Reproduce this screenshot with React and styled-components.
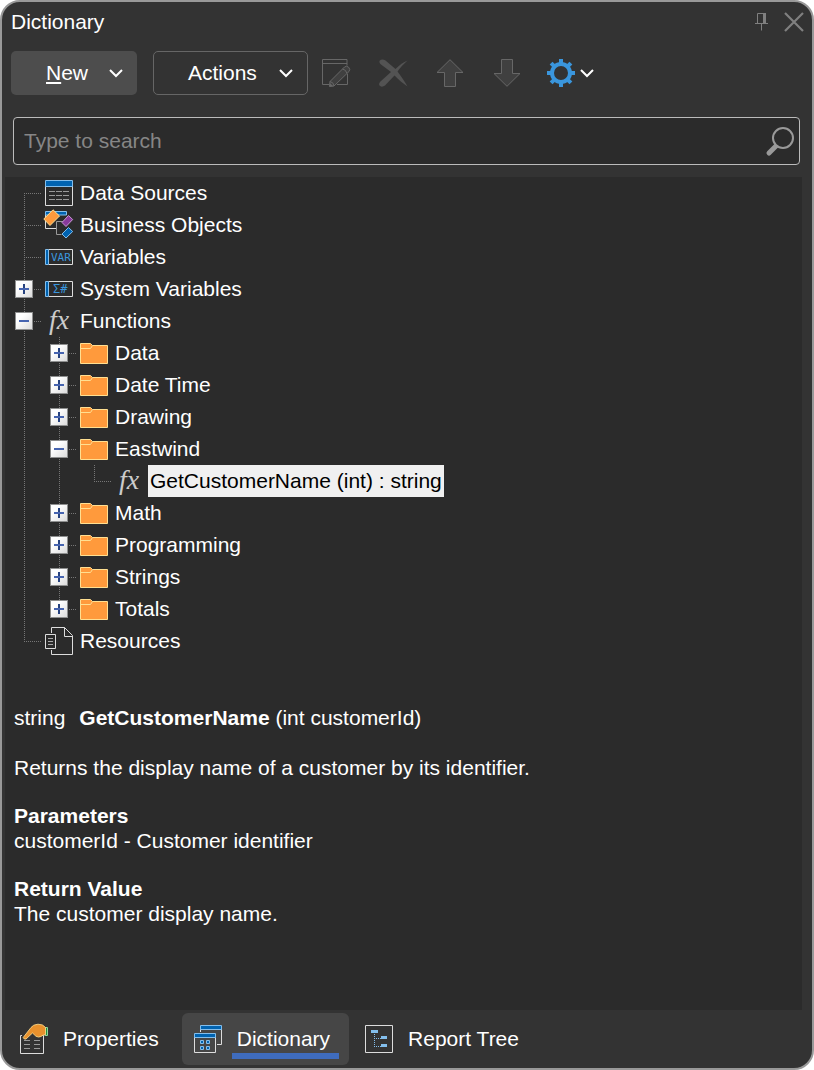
import React, { useState } from 'react';
import styled, { createGlobalStyle, css } from 'styled-components';

const GlobalStyle = createGlobalStyle`
  *, *::before, *::after {
    box-sizing: border-box;
  }

  body {
    margin: 0;
    background: #fff;
  }

  body, button, input {
    font-family: "Liberation Sans", Arial, sans-serif;
    font-size: 21px;
    color: #fff;
  }

  button {
    margin: 0;
    padding: 0;
    border: 0;
    background: none;
  }

  svg {
    display: block;
    flex: none;
    overflow: visible;
  }
`;

const Window = styled.div`
  display: flex;
  flex-direction: column;
  min-height: 100vh;
  border: 2px solid #999;
  border-radius: 20px;
  background: #333;
`;

const TitleBar = styled.header`
  display: flex;
  align-items: center;
  gap: 16px;
  height: 40px;
  padding: 0 8px 0 9px;
`;

const Title = styled.h1`
  flex: 1;
  margin: 0;
  font-size: 21px;
  font-weight: 400;
`;

const Toolbar = styled.div`
  display: flex;
  align-items: center;
  height: 62px;
  padding: 0 9px;
`;

const MenuButton = styled.button`
  display: flex;
  align-items: center;
  justify-content: space-between;
  width: ${({ $wide }) => ($wide ? '155px' : '126px')};
  height: 44px;
  margin-right: ${({ $wide }) => ($wide ? '0' : '16px')};
  padding: 0 14px 0 ${({ $wide }) => ($wide ? '34px' : '35px')};
  border-radius: 5px;
  ${({ $filled }) =>
    $filled
      ? css`
          background: #4d4d4d;
        `
      : css`
          border: 1px solid #666;
        `}
`;

const ToolButton = styled.button`
  display: flex;
  align-items: center;
  gap: 5px;
  height: 44px;
  padding: 0 15px 0 14px;
`;

const SettingsButton = styled(ToolButton)`
  padding: 0 0 0 11px;
`;

const SearchBox = styled.label`
  display: flex;
  align-items: center;
  height: 48px;
  margin: 13px 12px 12px 11px;
  padding: 0 5px 0 10px;
  border: 1px solid #bbb;
  border-radius: 4px;
  background: #2b2b2b;
`;

const SearchInput = styled.input`
  flex: 1;
  min-width: 0;
  padding: 0;
  border: 0;
  outline: 0;
  background: none;

  &::placeholder {
    color: #868686;
    opacity: 1;
  }
`;

const Panel = styled.main`
  flex: 1;
  margin: 0 10px 0 3px;
  background: #2b2b2b;
`;

const TreeList = styled.ul`
  margin: 0;
  padding: 0 0 0 2px;
  list-style: none;
`;

const TreeRow = styled.li`
  display: flex;
  align-items: center;
  height: 32px;
`;

const dots = (direction) =>
  `repeating-linear-gradient(to ${direction}, #777 0 1px, transparent 1px 2px)`;

const guides = {
  through: css`
    background-image: ${dots('bottom')};
    background-position: 17px 0;
    background-size: 1px 100%;
  `,
  first: css`
    background-image: ${dots('bottom')}, ${dots('right')};
    background-position: 17px 16px, 17px 16px;
    background-size: 1px 16px, 18px 1px;
  `,
  branch: css`
    background-image: ${dots('bottom')}, ${dots('right')};
    background-position: 17px 0, 17px 16px;
    background-size: 1px 100%, 18px 1px;
  `,
  last: css`
    background-image: ${dots('bottom')}, ${dots('right')};
    background-position: 17px 0, 17px 16px;
    background-size: 1px 16px, 18px 1px;
  `,
};

const Guide = styled.span`
  display: flex;
  align-items: center;
  flex: none;
  width: 35px;
  height: 32px;
  padding-left: 8px;
  background-repeat: no-repeat;
  ${({ $kind }) => guides[$kind]}
`;

const Expander = styled.button`
  display: grid;
  place-items: center;
  width: 18px;
  height: 18px;
  border: 1px solid #8e8f8f;
  background: linear-gradient(135deg, #fff 30%, #dcdcdc);
`;

const NodeIcon = styled.span`
  margin: 0 5px 0 3px;
`;

const NodeLabel = styled.span`
  padding: 0 2px;
  line-height: 32px;
  white-space: nowrap;
  ${({ $selected }) =>
    $selected &&
    css`
      background: #f0f0f0;
      color: #000;
    `}
`;

const Description = styled.section`
  padding: 48px 9px 24px;
  line-height: 25px;
`;

const Signature = styled.p`
  margin: 0 0 25px;

  b {
    margin-left: 14px;
  }
`;

const Paragraph = styled.p`
  margin: 0 0 23px;
`;

const Heading = styled.h2`
  margin: 0;
  font-size: 21px;
  font-weight: 700;
`;

const TabBar = styled.nav`
  display: flex;
  gap: 4px;
  padding: 3px 6px;
`;

const Tab = styled.button`
  position: relative;
  display: flex;
  align-items: center;
  gap: 15px;
  height: 52px;
  padding: 0 19px 0 12px;
  border-radius: 6px;
  background: ${({ $active }) => ($active ? '#464646' : 'none')};

  &::after {
    content: "";
    display: ${({ $active }) => ($active ? 'block' : 'none')};
    position: absolute;
    right: 10px;
    bottom: 6px;
    left: 50px;
    height: 6px;
    background: #3f6cbd;
  }
`;

const Icon = ({ size = 28, children }) => (
  <svg width={size} height={size} viewBox={`0 0 ${size} ${size}`} fill="none" aria-hidden="true">
    {children}
  </svg>
);

const Chevron = () => (
  <svg width="14" height="8" viewBox="0 0 14 8" fill="none" aria-hidden="true">
    <path d="M1 1l6 6 6-6" stroke="#fff" strokeWidth="2" />
  </svg>
);

const PinIcon = () => (
  <svg width="13" height="18" viewBox="0 0 13 18" fill="none" aria-hidden="true">
    <path d="M2.5 11V.5h8V11M0 10.5h13M6.500 11v6.500" stroke="#808080" />
    <path d="M8 0h3v11H8z" fill="#808080" />
  </svg>
);

const CloseIcon = () => (
  <Icon size={20}>
    <path d="M1 1l18 18M19 1L1 19" stroke="#808080" strokeWidth="2.200" />
  </Icon>
);

const EditIcon = () => (
  <Icon>
    <path d="M25 6.500V.5H.5v25H7M.5 4.500H25M25.500 15v10.500H15" stroke="#676767" />
    <path
      d="M7.500 27.500L8 22.500 22.500 8q2-1.800 4.200.3 2 2.200.3 4.200L12 27z"
      fill="#404040"
      stroke="#676767"
    />
    <path d="M8 22.500q3.500.5 4 4.500M20.500 10q3.500.5 4.500 4.500" stroke="#676767" />
    <path d="M7.500 27.500l.3-3.500 3.500 3.200z" fill="#676767" />
  </Icon>
);

const DeleteIcon = () => (
  <Icon>
    <path
      d="M.8 1.500C2 .2 4.500 0 6.500 1.500L16.500 10C20.500 6 24.500 3 28.500 1.500 24.500 5 21.500 8.500 18.500 12.500 22 17 25 21.500 28.500 27.500 24 24.500 19.500 20.500 15.500 16.500L6 26.500C4 28 1.500 28 .5 26.500c-1-1.500 0-3.200 1.500-4.500L12 13 2 5.500C.3 4 0 2.500.8 1.500z"
      fill="#535353"
    />
  </Icon>
);

const UpIcon = () => (
  <Icon>
    <path d="M14 .7L27 13.500h-7.500v14h-11v-14H1z" fill="#404040" stroke="#676767" />
  </Icon>
);

const DownIcon = () => (
  <Icon>
    <path d="M14 27.300L1 14.500h7.500V.5h11v14H27z" fill="#404040" stroke="#676767" />
  </Icon>
);

const GearIcon = () => (
  <Icon>
    <circle cx="14" cy="14" r="9" stroke="#3a96dd" strokeWidth="4" />
    {[0, 45, 90, 135, 180, 225, 270, 315].map((angle) => (
      <path key={angle} d="M12 0h4v5h-4z" fill="#3a96dd" transform={`rotate(${angle} 14 14)`} />
    ))}
  </Icon>
);

const SearchIcon = () => (
  <Icon>
    <path d="M11 18l-8 8" stroke="#999" strokeWidth="5" strokeLinecap="round" />
    <circle cx="17" cy="11" r="10" fill="#2b2b2b" stroke="#999" strokeWidth="2" />
  </Icon>
);

const DataSourcesIcon = () => (
  <Icon>
    <path d="M.5 7v19.500h27V7" stroke="#ddd" />
    <path d="M.5 1.500h27v6H.5z" fill="#0063b1" stroke="#83beec" />
    <path
      d="M4 12.500h6m1 0h6m1 0h6M4 16.500h6m1 0h6m1 0h6M4 20.500h6m1 0h6m1 0h6"
      stroke="#999"
    />
  </Icon>
);

const BusinessObjectsIcon = () => (
  <Icon>
    <path d="M.5 4v13.500H11" stroke="#ddd" />
    <path d="M.5.5h21v3.500H.5z" fill="#0063b1" stroke="#83beec" />
    <path d="M11.500 23.500h5M18 10.500h-6.500v13" stroke="#999" />
    <path d="M8 -1.200L14.500 5 5 14.500-1.200 8z" fill="#ff9a3c" stroke="#ffdf91" />
    <path d="M23.500 4.500L27.700 8.500 21 15.500 17 11.500z" fill="#883a9b" stroke="#c998d5" />
    <path d="M23.500 16.500L27.700 20.500 21 27 17 23z" fill="#0063b1" stroke="#83beec" />
  </Icon>
);

const SymbolIcon = ({ children, x, size }) => (
  <Icon>
    <path d="M3.500 6.500h24v15h-24" stroke="#ddd" />
    <path d="M.5 6.500h3v15h-3z" fill="#0063b1" stroke="#83beec" />
    <text x={x} y="18" fill="#3a96dd" fontFamily="DejaVu Sans Mono, monospace" fontSize={size}>
      {children}
    </text>
  </Icon>
);

const VariablesIcon = () => <SymbolIcon x="6" size="11">VAR</SymbolIcon>;
const SystemVariablesIcon = () => <SymbolIcon x="8" size="12">Σ#</SymbolIcon>;

const FunctionIcon = () => (
  <Icon>
    <text x="4" y="22" fill="#ccc" fontFamily="Liberation Serif, serif" fontStyle="italic" fontSize="28">
      fx
    </text>
  </Icon>
);

const FolderIcon = () => (
  <Icon>
    <path d="M.5 24.500v-20h10l2 2h15v18z" fill="#ff9a3c" stroke="#ffdf91" />
    <path d="M.5 9.500h10l2-3" stroke="#ffdf91" />
  </Icon>
);

const ResourcesIcon = () => (
  <Icon>
    <path d="M6.500 6V.5h13l8 8v19h-21V23" stroke="#ddd" />
    <path d="M19.500.5v9h8" stroke="#ddd" />
    <path d="M.5 7.500h10v14H.5z" stroke="#ddd" />
    <path d="M3 11.500h5M3 14.500h5M3 17.500h5" stroke="#aaa" />
  </Icon>
);

const PropertiesIcon = () => (
  <Icon>
    <path d="M2 10.500H.5v18h23v-18H21" stroke="#ddd" />
    <path d="M4 15.500h6m4 0h6M4 19.500h6m4 0h6M4 23.500h6m4 0h6" stroke="#999" />
    <path d="M25 2.500h2.500v8H25z" fill="#218a3b" stroke="#8ed6a0" />
    <path
      d="M3.200 12.500L11 2.500Q13-.5 18-.8q5-.2 7.500 3.300V9.500q-3 .5-4.500 2-2.500 1.200-5-.2L12.500 8 6 14q-2 .8-2.800-1.500z"
      fill="#e8912d"
      stroke="#ffdf91"
      strokeWidth=".8"
    />
  </Icon>
);

const DictionaryIcon = () => (
  <Icon>
    <path d="M6.500 7V4M27.500 4v15.500H23" stroke="#ddd" />
    <path d="M6.500.5h21v4h-21z" fill="#0063b1" stroke="#83beec" />
    <path d="M.5 12v15.500h21V12" stroke="#ddd" />
    <path d="M.5 8.500h21v4H.5z" fill="#0063b1" stroke="#83beec" />
    <path
      d="M6.500 15.500h3v3h-3zM12.500 15.500h3v3h-3zM6.500 21.500h3v3h-3zM12.500 21.500h3v3h-3z"
      fill="#0063b1"
      stroke="#83beec"
    />
  </Icon>
);

const ReportTreeIcon = () => (
  <Icon>
    <path d="M.5.5h27v27H.5z" stroke="#ddd" />
    <path d="M6 5h7v3H6zM16 11h6v3h-6zM16 19h6v3h-6z" fill="#83beec" />
    <path d="M9.500 9v14M11 13.500h5M11 21.500h5" stroke="#83beec" strokeDasharray="1 1" />
  </Icon>
);

const tree = [
  { name: 'Data Sources', icon: DataSourcesIcon, guides: ['first'] },
  { name: 'Business Objects', icon: BusinessObjectsIcon, guides: ['branch'] },
  { name: 'Variables', icon: VariablesIcon, guides: ['branch'] },
  { name: 'System Variables', icon: SystemVariablesIcon, guides: ['branch'], toggle: 'plus' },
  { name: 'Functions', icon: FunctionIcon, guides: ['branch'], toggle: 'minus' },
  { name: 'Data', icon: FolderIcon, guides: ['through', 'branch'], toggle: 'plus' },
  { name: 'Date Time', icon: FolderIcon, guides: ['through', 'branch'], toggle: 'plus' },
  { name: 'Drawing', icon: FolderIcon, guides: ['through', 'branch'], toggle: 'plus' },
  { name: 'Eastwind', icon: FolderIcon, guides: ['through', 'branch'], toggle: 'minus' },
  {
    name: 'GetCustomerName (int) : string',
    icon: FunctionIcon,
    guides: ['through', 'through', 'last'],
    selected: true,
  },
  { name: 'Math', icon: FolderIcon, guides: ['through', 'branch'], toggle: 'plus' },
  { name: 'Programming', icon: FolderIcon, guides: ['through', 'branch'], toggle: 'plus' },
  { name: 'Strings', icon: FolderIcon, guides: ['through', 'branch'], toggle: 'plus' },
  { name: 'Totals', icon: FolderIcon, guides: ['through', 'last'], toggle: 'plus' },
  { name: 'Resources', icon: ResourcesIcon, guides: ['last'] },
];

const tabs = [
  { name: 'Properties', icon: PropertiesIcon },
  { name: 'Dictionary', icon: DictionaryIcon },
  { name: 'Report Tree', icon: ReportTreeIcon },
];

const TreeNode = ({ node }) => {
  const NodeImage = node.icon;

  return (
    <TreeRow
      role="treeitem"
      aria-level={node.guides.length}
      aria-selected={Boolean(node.selected)}
      aria-expanded={node.toggle ? node.toggle === 'minus' : undefined}
    >
      {node.guides.map((kind, index) => (
        <Guide key={index} $kind={kind}>
          {node.toggle && index === node.guides.length - 1 && (
            <Expander type="button" aria-label={`Toggle ${node.name}`}>
              <svg width="10" height="10" viewBox="0 0 10 10" aria-hidden="true">
                {node.toggle === 'plus' && <path d="M4 0h2v10H4z" fill="#26427f" />}
                <path d="M0 4h10v2H0z" fill="#4664b0" />
              </svg>
            </Expander>
          )}
        </Guide>
      ))}
      <NodeIcon>
        <NodeImage />
      </NodeIcon>
      <NodeLabel $selected={node.selected}>{node.name}</NodeLabel>
    </TreeRow>
  );
};

const App = () => {
  const [search, setSearch] = useState('');
  const [activeTab, setActiveTab] = useState('Dictionary');

  return (
    <>
      <GlobalStyle />
      <Window>
        <TitleBar>
          <Title>Dictionary</Title>
          <button type="button" aria-label="Pin"><PinIcon /></button>
          <button type="button" aria-label="Close"><CloseIcon /></button>
        </TitleBar>

        <Toolbar>
          <MenuButton type="button" $filled>
            <span><u>N</u>ew</span>
            <Chevron />
          </MenuButton>
          <MenuButton type="button" $wide>
            Actions
            <Chevron />
          </MenuButton>
          <ToolButton type="button" aria-label="Edit" disabled><EditIcon /></ToolButton>
          <ToolButton type="button" aria-label="Delete" disabled><DeleteIcon /></ToolButton>
          <ToolButton type="button" aria-label="Move up" disabled><UpIcon /></ToolButton>
          <ToolButton type="button" aria-label="Move down" disabled><DownIcon /></ToolButton>
          <SettingsButton type="button" aria-label="Settings">
            <GearIcon />
            <Chevron />
          </SettingsButton>
        </Toolbar>

        <SearchBox>
          <SearchInput
            type="text"
            aria-label="Search"
            placeholder="Type to search"
            value={search}
            onChange={(event) => setSearch(event.target.value)}
          />
          <SearchIcon />
        </SearchBox>

        <Panel>
          <TreeList role="tree">
            {tree.map((node) => (
              <TreeNode key={node.name} node={node} />
            ))}
          </TreeList>

          <Description>
            <Signature>
              string<b>GetCustomerName</b> (int customerId)
            </Signature>
            <Paragraph>Returns the display name of a customer by its identifier.</Paragraph>
            <Heading>Parameters</Heading>
            <Paragraph>customerId - Customer identifier</Paragraph>
            <Heading>Return Value</Heading>
            <Paragraph>The customer display name.</Paragraph>
          </Description>
        </Panel>

        <TabBar>
          {tabs.map(({ name, icon: TabIcon }) => (
            <Tab
              key={name}
              type="button"
              $active={name === activeTab}
              onClick={() => setActiveTab(name)}
            >
              <TabIcon />
              {name}
            </Tab>
          ))}
        </TabBar>
      </Window>
    </>
  );
};

export default App;
